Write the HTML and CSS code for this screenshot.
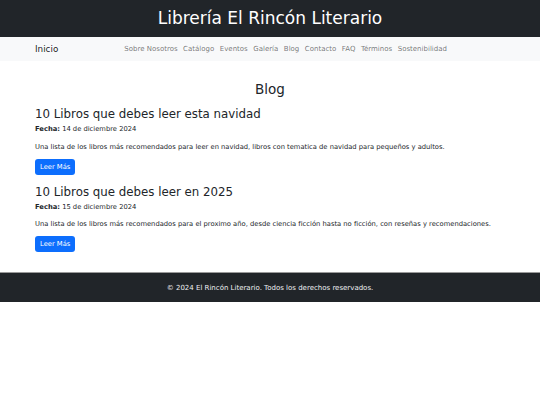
FILE: index.html
```html
<!DOCTYPE html>
<html lang="es">
<head>
<meta charset="utf-8">
<title>Blog - Librería El Rincón Literario</title>
<link rel="stylesheet" href="styles.css">
</head>
<body>
<header class="site-header">
  <h1 class="site-title">Librería El Rincón Literario</h1>
</header>
<nav class="navbar">
  <a class="brand" href="#">Inicio</a>
  <ul class="nav-links">
    <li><a href="#">Sobre Nosotros</a></li>
    <li><a href="#">Catálogo</a></li>
    <li><a href="#">Eventos</a></li>
    <li><a href="#">Galería</a></li>
    <li><a href="#">Blog</a></li>
    <li><a href="#">Contacto</a></li>
    <li><a href="#">FAQ</a></li>
    <li><a href="#">Términos</a></li>
    <li><a href="#">Sostenibilidad</a></li>
  </ul>
</nav>
<main class="content">
  <h2 class="page-title">Blog</h2>
  <article class="post">
    <h3 class="post-title">10 Libros que debes leer esta navidad</h3>
    <p class="post-date"><strong>Fecha:</strong> 14 de diciembre 2024</p>
    <p class="post-text">Una lista de los libros más recomendados para leer en navidad, libros con tematica de navidad para pequeños y adultos.</p>
    <a class="btn" href="#">Leer Más</a>
  </article>
  <article class="post">
    <h3 class="post-title">10 Libros que debes leer en 2025</h3>
    <p class="post-date"><strong>Fecha:</strong> 15 de diciembre 2024</p>
    <p class="post-text">Una lista de los libros más recomendados para el proximo año, desde ciencia ficción hasta no ficción, con reseñas y recomendaciones.</p>
    <a class="btn" href="#">Leer Más</a>
  </article>
</main>
<footer class="site-footer">
  <p>© 2024 El Rincón Literario. Todos los derechos reservados.</p>
</footer>
</body>
</html>
```
FILE: styles.css
```css
* { box-sizing: border-box; }
html, body { margin: 0; padding: 0; }
body {
  font-family: "DejaVu Sans", sans-serif;
  color: #212529;
  background: #fff;
}
.site-header {
  background: #212529;
  height: 37px;
  display: flex;
  align-items: center;
  justify-content: center;
}
.site-title {
  margin: 0;
  color: #fff;
  font-weight: 400;
  font-size: 17px;
  line-height: 37px;
}
.navbar {
  background: #f8f9fa;
  height: 24px;
  display: flex;
  align-items: center;
  padding: 0 35px;
}
.brand {
  font-size: 8.8px;
  line-height: 12px;
  color: rgba(0,0,0,.9);
  text-decoration: none;
  margin-right: 8px;
}
.nav-links {
  list-style: none;
  margin: 0 auto;
  padding: 0;
  display: flex;
  align-items: center;
  gap: 5.5px;
}
.nav-links li { line-height: 12px; }
.nav-links a {
  display: block;
  font-size: 7px;
  line-height: 12px;
  color: rgba(0,0,0,.55);
  text-decoration: none;
}
.content {
  padding: 20px 35px 17px;
}
.page-title {
  margin: 0 0 9px;
  text-align: center;
  font-weight: 400;
  font-size: 13.5px;
  line-height: 16px;
}
.post { margin-bottom: 6px; }
.post:last-child { margin-bottom: 0; }
.post-title {
  margin: 0 0 3px;
  font-weight: 400;
  font-size: 11.8px;
  line-height: 16px;
}
.post-date, .post-text {
  margin: 0;
  font-size: 6.75px;
  line-height: 9px;
}
.post-date { margin-bottom: 8.5px; }
.post-text { margin-bottom: 7px; }
.btn {
  display: inline-block;
  background: #0d6efd;
  color: #fff;
  font-size: 6.75px;
  line-height: 16px;
  height: 16px;
  padding: 0 5px;
  border-radius: 3px;
  text-decoration: none;
  vertical-align: top;
}
.site-footer {
  background: #212529;
  border-top: 1px solid #9a9a9a;
  height: 30px;
  display: flex;
  align-items: center;
  justify-content: center;
}
.site-footer p {
  margin: 0;
  color: #eef0f2;
  font-size: 7px;
}
```
